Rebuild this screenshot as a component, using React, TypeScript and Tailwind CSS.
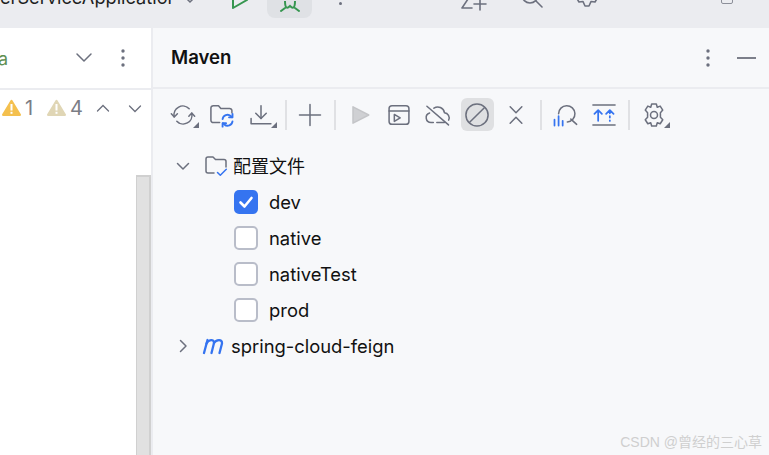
import type { ReactNode } from 'react'

const UI = 'font-["Inter","Noto_Sans_CJK_SC",sans-serif]'

function Icon({ children, size = 28, box = 24 }: { children: ReactNode; size?: number; box?: number }) {
  return (
    <svg width={size} height={size} viewBox={`0 0 ${box} ${box}`} fill="none" stroke="#6c707e" strokeWidth="1.3" strokeLinecap="round" strokeLinejoin="round">
      {children}
    </svg>
  )
}

function Corner() {
  return <span className="absolute right-[1px] bottom-[3px] w-0 h-0 border-l-[6px] border-l-transparent border-b-[6px] border-b-[#6c707e]" />
}

function ToolButton({ children, corner, active }: { children: ReactNode; corner?: boolean; active?: boolean }) {
  return (
    <div className={`relative w-[33px] h-[33px] flex items-center justify-center rounded-md shrink-0 ${active ? 'bg-[#dfe0e2]' : ''}`}>
      {children}
      {corner && <Corner />}
    </div>
  )
}

function Sep({ wide }: { wide?: boolean }) {
  return <div className={`w-[2px] h-[30px] bg-[#e0e1e4] shrink-0 ${wide ? 'mx-[1.5px]' : 'mx-[1px]'}`} />
}

function Dots({ color = '#6c707e' }: { color?: string }) {
  return (
    <svg width="4" height="18" viewBox="0 0 4 18" fill={color}>
      <circle cx="2" cy="2" r="1.7" />
      <circle cx="2" cy="9" r="1.7" />
      <circle cx="2" cy="16" r="1.7" />
    </svg>
  )
}

function Warning({ color }: { color: string }) {
  return (
    <svg width="19" height="18" viewBox="0 0 19 18">
      <path d="M9.5 2 L17.8 15.8 H1.2 Z" fill={color} stroke={color} strokeWidth="2.4" strokeLinejoin="round" />
      <rect x="8.5" y="5" width="2" height="6.5" fill="#fff" />
      <rect x="8.5" y="12.8" width="2" height="2" fill="#fff" />
    </svg>
  )
}

function Toolbar() {
  return (
    <div className="flex items-center gap-[6px] pl-[13.5px] pt-[9px] h-[42px]">
      <ToolButton corner>
        <Icon>
          <path d="M4.5 13.5a7.5 7.5 0 0 1 12.8-6.8" />
          <path d="M19.5 10.5a7.5 7.5 0 0 1-12.8 6.8" />
          <path d="M2 11l2.5 2.7L7.2 11" />
          <path d="M17 13l2.5-2.7L22 13" />
        </Icon>
      </ToolButton>
      <ToolButton>
        <Icon>
          <path d="M10 18.5H4.5a2 2 0 0 1-2-2V6a2 2 0 0 1 2-2h4.5l2 2.4h7.5a2 2 0 0 1 2 2V10" />
          <g stroke="#3574f0" strokeWidth="1.6">
            <path d="M12.5 15.5a4.2 4.2 0 0 1 7-2.6l1.2 1" />
            <path d="M21 11v3h-3" />
            <path d="M21 17.5a4.2 4.2 0 0 1-7 2.6l-1.2-1" />
            <path d="M12.5 22v-3h3" />
          </g>
        </Icon>
      </ToolButton>
      <ToolButton corner>
        <Icon>
          <path d="M12 4v11" />
          <path d="M7.5 10.5L12 15l4.5-4.5" />
          <path d="M3.5 15v4.5h17" />
        </Icon>
      </ToolButton>
      <Sep />
      <ToolButton>
        <Icon>
          <path d="M12 3v18M3 12h18" />
        </Icon>
      </ToolButton>
      <Sep wide />
      <ToolButton>
        <Icon>
          <path d="M6 5L19.5 12 6 19Z" fill="#cfd0d3" stroke="#c4c5c8" />
        </Icon>
      </ToolButton>
      <ToolButton>
        <Icon>
          <rect x="3.5" y="4" width="17" height="16" rx="2.5" />
          <path d="M3.5 8.5h17" />
          <path d="M8 11.5l5 3-5 3Z" />
        </Icon>
      </ToolButton>
      <ToolButton>
        <Icon>
          <path d="M8 18.5H6a4.2 4.2 0 0 1-1.2-8.2" />
          <path d="M8.5 6.2A5.7 5.7 0 0 1 17.5 10a4.4 4.4 0 0 1 3.6 6.4" />
          <path d="M2.5 4.5L21 20.5" />
          <path d="M11 18.5h6.5" />
        </Icon>
      </ToolButton>
      <ToolButton active>
        <Icon>
          <circle cx="12" cy="12" r="9.5" />
          <path d="M5.5 18.5L18.5 5.5" />
        </Icon>
      </ToolButton>
      <ToolButton>
        <Icon>
          <path d="M7 5l5 5 5-5" />
          <path d="M7 19l5-5 5 5" />
        </Icon>
      </ToolButton>
      <Sep />
      <ToolButton>
        <Icon>
          <path d="M6.5 11a7 7 0 1 1 7.5 7" />
          <path d="M17 15.5l5 4.5" />
          <path d="M3 16v5M6.5 13v8M10 17v4" stroke="#3574f0" strokeWidth="1.5" />
        </Icon>
      </ToolButton>
      <ToolButton>
        <Icon>
          <path d="M2.5 3.5h19M2.5 20.5h19" />
          <g stroke="#3574f0" strokeWidth="1.5">
            <path d="M7 17V8M3.8 11L7 7.8l3.2 3.2" />
            <path d="M17 9v1.5M17 13v1.2M17 16.5v.6M13.8 11L17 7.8l3.2 3.2" />
          </g>
        </Icon>
      </ToolButton>
      <Sep wide />
      <ToolButton corner>
        <Icon>
          <path d="M10 2.5h4l.8 2.8 2.5-.9 2.2 3.4-2 2.2v3.9l2 2.2-2.2 3.4-2.5-.9-.8 2.8h-4l-.8-2.8-2.5.9-2.2-3.4 2-2.2v-3.9l-2-2.2 2.2-3.4 2.5.9Z" />
          <circle cx="12" cy="12" r="3" />
        </Icon>
      </ToolButton>
    </div>
  )
}

function ProfileRow({ name, checked }: { name: string; checked?: boolean }) {
  return (
    <div className="flex items-center h-[36px] pl-[81px]">
      {checked ? (
        <div className="w-[24px] h-[24px] rounded-[5px] bg-[#3574f0] flex items-center justify-center">
          <svg width="18" height="18" viewBox="0 0 18 18" fill="none" stroke="#fff" strokeWidth="2.6" strokeLinecap="round" strokeLinejoin="round">
            <path d="M3.5 9.5L7.5 13.5L14.5 5" />
          </svg>
        </div>
      ) : (
        <div className="w-[24px] h-[24px] rounded-[5px] bg-white border-2 border-[#b9bdc9]" />
      )}
      <span className="ml-[11px] pt-[2px] text-[18.4px] text-[#111]">{name}</span>
    </div>
  )
}

function Tree() {
  return (
    <div className="mt-[17px]">
      <div className="flex items-center h-[36px] pl-[22px]">
        <svg width="16" height="16" viewBox="0 0 16 16" fill="none" stroke="#6c707e" strokeWidth="1.5" strokeLinecap="round" strokeLinejoin="round">
          <path d="M2.5 5.5L8 11l5.5-5.5" />
        </svg>
        <svg className="ml-[12px]" width="26" height="26" viewBox="0 0 26 26" fill="none" stroke="#6c707e" strokeWidth="1.5" strokeLinecap="round" strokeLinejoin="round">
          <path d="M11 20H5a2 2 0 0 1-2-2V6a2 2 0 0 1 2-2h5l2.5 2.5H21a2 2 0 0 1 2 2V14" />
          <path d="M14.5 19.5l2.8 2.8 6-6" stroke="#3574f0" />
        </svg>
        <span className="ml-[4px] text-[18px] text-[#111]">配置文件</span>
      </div>
      <ProfileRow name="dev" checked />
      <ProfileRow name="native" />
      <ProfileRow name="nativeTest" />
      <ProfileRow name="prod" />
      <div className="flex items-center h-[36px] pl-[22px]">
        <svg width="16" height="16" viewBox="0 0 16 16" fill="none" stroke="#6c707e" strokeWidth="1.5" strokeLinecap="round" strokeLinejoin="round">
          <path d="M5.5 2.5L11 8l-5.5 5.5" />
        </svg>
        <svg className="ml-[11px]" width="26" height="22" viewBox="0 0 26 22" fill="none" stroke="#3574f0" strokeWidth="2.3" strokeLinecap="round" strokeLinejoin="round">
          <path d="M2 18L5.5 5" />
          <path d="M4.5 8.5C6.5 4.5 12 3.5 12 8L9.5 18" />
          <path d="M12 8C14 4.5 20.5 3.5 20 8.5L17.5 18" />
        </svg>
        <span className="ml-[3px] pt-[2px] text-[18.4px] text-[#111]">spring-cloud-feign</span>
      </div>
    </div>
  )
}

function TopBar() {
  return (
    <div className="relative h-[27px] bg-[#ebecf0] overflow-hidden flex items-start shrink-0">
      <span className="text-[18.2px] leading-[22px] text-[#1e1f22] -mt-[14px] w-[174px] overflow-hidden whitespace-nowrap">erServiceApplication</span>
      <svg className="ml-[10px] -mt-[3px]" width="12" height="8" viewBox="0 0 12 8" fill="none" stroke="#6c707e" strokeWidth="1.5"><path d="M2 1l4 4 4-4" /></svg>
      <svg className="ml-[34px] -mt-[12px]" width="20" height="24" viewBox="0 0 20 24" fill="none" stroke="#369650" strokeWidth="2" strokeLinejoin="round"><path d="M3 4L17 12 3 20Z" /></svg>
      <div className="ml-[17px] -mt-[6px] w-[45px] h-[24px] rounded-b-lg bg-[#dfe1e5] flex items-end justify-center pb-[5px]">
        <svg width="24" height="12" viewBox="0 0 24 12" fill="none" stroke="#369650" strokeWidth="2" strokeLinecap="round"><path d="M3 10l4-3M21 10l-4-3M7 0c0 9 3 7 5 5 2 2 5 4 5-5" /></svg>
      </div>
      <div className="ml-[27px] mt-[2px] w-[3px] h-[3px] rounded-full bg-[#6c707e]" />
      <svg className="ml-[117px] -mt-[6px]" width="28" height="18" viewBox="0 0 28 18" fill="none" stroke="#6c707e" strokeWidth="1.6" strokeLinecap="round" strokeLinejoin="round"><path d="M3 2l8 0-8 12h10M21 4v12M15 10h12" /></svg>
      <svg className="ml-[30px] -mt-[10px]" width="28" height="20" viewBox="0 0 28 20" fill="none" stroke="#6c707e" strokeWidth="1.6" strokeLinecap="round"><circle cx="13" cy="5" r="8" /><path d="M19 11l6 6" /></svg>
      <svg className="ml-[28px] -mt-[12px]" width="28" height="22" viewBox="0 0 28 22" fill="none" stroke="#6c707e" strokeWidth="1.6" strokeLinejoin="round"><path d="M3 9l3 5 4-.5 2 4.5h4l2-4.5 4 .5 3-5-3-3V2H6v4Z" /></svg>
      <div className="ml-[120px] -mt-[8px] w-[12px] h-[12px] rounded-[2px] border border-[#8c8f99]" />
    </div>
  )
}

function LeftPanel() {
  return (
    <div className="w-[151px] shrink-0 bg-white flex flex-col">
      <div className="h-[60px] flex items-center shrink-0">
        <span className="text-[18px] text-[#5f8f52] -ml-[2px]">a</span>
        <svg className="ml-[67px]" width="18" height="12" viewBox="0 0 18 12" fill="none" stroke="#6c707e" strokeWidth="1.5" strokeLinecap="round" strokeLinejoin="round"><path d="M2 2l7 7 7-7" /></svg>
        <div className="ml-[28px]"><Dots /></div>
      </div>
      <div className="h-[2px] bg-[#ebecf0] shrink-0" />
      <div className="h-[36px] flex items-center pl-[2px] shrink-0">
        <Warning color="#f4c04e" />
        <span className="ml-[4px] w-[10px] text-[20px] text-[#7b7d85]">1</span>
        <span className="ml-[12px] flex"><Warning color="#e0d6b5" /></span>
        <span className="ml-[4px] w-[11px] text-[20px] text-[#7b7d85]">4</span>
        <svg className="ml-[15px]" width="14" height="9" viewBox="0 0 14 9" fill="none" stroke="#6c707e" strokeWidth="1.3" strokeLinecap="round"><path d="M1.5 7l5.5-5.5L12.5 7" /></svg>
        <svg className="ml-[18px]" width="14" height="9" viewBox="0 0 14 9" fill="none" stroke="#6c707e" strokeWidth="1.3" strokeLinecap="round"><path d="M1.5 2l5.5 5.5L12.5 2" /></svg>
      </div>
      <div className="flex-1 flex justify-end pt-[49px] min-h-0">
        <div className="w-[15px] bg-[#e1e1e1] border-l border-r-2 border-t-2 border-[#d0d0d0]" />
      </div>
    </div>
  )
}

function MavenPanel() {
  return (
    <div className="relative flex-1 flex flex-col bg-[#f7f8fa] min-w-0">
      <div className="h-[59px] flex items-center pl-[18px] pr-[13px] shrink-0">
        <span className="text-[18.6px] font-semibold text-[#111]">Maven</span>
        <div className="ml-auto flex items-center">
          <Dots />
          <div className="ml-[27px] w-[19px] h-[2px] bg-[#7c7f8a]" />
        </div>
      </div>
      <div className="h-[2px] bg-[#ebecf0] shrink-0" />
      <Toolbar />
      <Tree />
      <span className='absolute right-[7px] bottom-[5px] text-[14px] leading-[16px] text-[#cfcfcf] font-["Liberation_Sans","Noto_Sans_CJK_SC",sans-serif]'>CSDN @曾经的三心草</span>
    </div>
  )
}

export default function App() {
  return (
    <div className={`w-[769px] h-[455px] overflow-hidden flex flex-col bg-[#ebecf0] ${UI}`}>
      <TopBar />
      <div className="flex-1 flex min-h-0 mt-[1px]">
        <LeftPanel />
        <div className="w-[2px] bg-[#ebecf0] shrink-0" />
        <MavenPanel />
      </div>
    </div>
  )
}
